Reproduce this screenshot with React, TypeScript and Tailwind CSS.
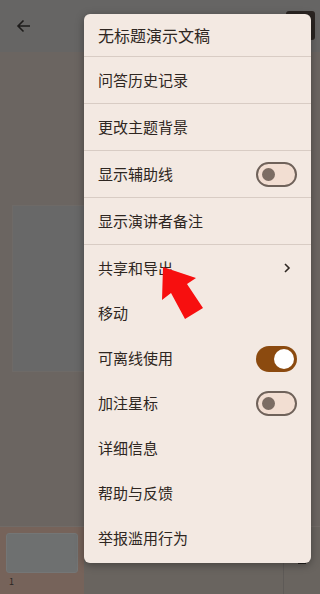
import React from "react";

type Item = { label: string; h: number; sep?: boolean; right?: "off" | "on" | "chev" };

const items: Item[] = [
  { label: "问答历史记录", h: 46, sep: true },
  { label: "更改主题背景", h: 46, sep: true },
  { label: "显示辅助线", h: 46, sep: true, right: "off" },
  { label: "显示演讲者备注", h: 46, sep: true },
  { label: "共享和导出", h: 46, right: "chev" },
  { label: "移动", h: 45 },
  { label: "可离线使用", h: 45, right: "on" },
  { label: "加注星标", h: 45, right: "off" },
  { label: "详细信息", h: 45 },
  { label: "帮助与反馈", h: 45 },
  { label: "举报滥用行为", h: 45 },
];

function ToggleOff() {
  return (
    <div className="w-[41px] h-[25px] rounded-full border-2 border-[#6f625a] bg-[#f2ded2] flex items-center pl-[4px]">
      <div className="w-[13px] h-[13px] rounded-full bg-[#7b6c63]" />
    </div>
  );
}

function ToggleOn() {
  return (
    <div className="w-[41px] h-[26px] rounded-full bg-[#8b4a0f] flex items-center justify-end pr-[3px]">
      <div className="w-[20px] h-[20px] rounded-full bg-white" />
    </div>
  );
}

export default function App() {
  return (
    <div
      className="relative w-[320px] h-[594px] overflow-hidden bg-[#6b6561] flex flex-col"
      style={{ fontFamily: '"Noto Sans CJK SC", "Noto Sans", sans-serif' }}
    >
      {/* top bar */}
      <div className="h-[52px] bg-[#666564] flex items-start justify-between pl-[16px] pr-[5px] pt-[11px] shrink-0">
        <svg width="16" height="16" viewBox="0 0 16 16" className="mt-[7px]" fill="none" stroke="#1e1c1b" strokeWidth="1.6">
          <path d="M14 8H2.5M7.5 2.5L2 8l5.5 5.5" />
        </svg>
        <div className="w-[29px] h-[29px] rounded-[3px] bg-[#2b2522]" />
      </div>

      {/* main area */}
      <div className="flex-1 px-[12px] pt-[153px]">
        <div className="w-[80px] h-[167px] bg-[#686868] border border-[#6e6a67]" />
      </div>

      {/* film strip */}
      <div className="h-[68px] shrink-0 flex border-t border-[#716b67] bg-[#69645f]">
        <div className="w-[84px] bg-[#76635a] px-[6px] pt-[6px]">
          <div className="h-[40px] rounded-[3px] bg-[#6e7070] border border-[#747676]" />
          <div className="text-[9px] leading-none text-[#2a2624] mt-[4px] ml-[3px]">1</div>
        </div>
        <div className="flex-1" />
        <div className="w-[37px] border-l border-[#5e5a57] relative">
          <div className="absolute left-[14px] top-[34px] w-[8px] h-[3px] bg-[#1f1c1a]" />
        </div>
      </div>

      {/* menu */}
      <div className="absolute left-[84px] top-[14px] w-[227px] rounded-[6px] bg-[#f3e9e2] shadow-[0_2px_8px_rgba(0,0,0,0.35)] pb-[2px] text-[#2e2621]">
        <div className="h-[42px] flex items-center px-[14px] text-[16px]">无标题演示文稿</div>
        <div className="h-px bg-[#d8ccc4]" />
        {items.map((it) => (
          <React.Fragment key={it.label}>
            <div className="flex items-center justify-between pl-[14px] pr-[14px] text-[15px]" style={{ height: it.h }}>
              <span>{it.label}</span>
              {it.right === "off" && <ToggleOff />}
              {it.right === "on" && <ToggleOn />}
              {it.right === "chev" && (
                <svg width="8" height="12" viewBox="0 0 8 12" fill="none" stroke="#2f2823" strokeWidth="1.6" className="mr-[6px]">
                  <path d="M2 2l4 4-4 4" />
                </svg>
              )}
            </div>
            {it.sep && <div className="h-px bg-[#d8ccc4]" />}
          </React.Fragment>
        ))}
      </div>

      {/* red arrow annotation */}
      <svg className="absolute left-0 top-0" width="320" height="594" viewBox="0 0 320 594">
        <polygon points="163,267 196,278 187,284 203,308 185,319 171,293 162,300" fill="#f70f0f" />
      </svg>
    </div>
  );
}
